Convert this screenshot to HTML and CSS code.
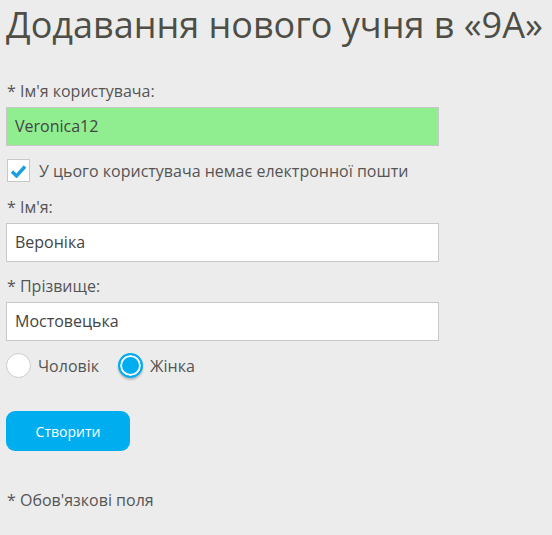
FILE: index.html
```html
<!DOCTYPE html>
<html lang="uk">
<head>
<meta charset="utf-8">
<link rel="stylesheet" href="styles.css">
</head>
<body>
<h1 class="title">Додавання нового учня в «9А»</h1>
<form class="form">
  <div class="field">
    <label class="label">* Ім'я користувача:</label>
    <div class="input input-ok">Veronica12</div>
  </div>
  <label class="check">
    <span class="check-box">
      <svg width="17" height="14" viewBox="0 0 17 14"><path d="M2 7.5 L6.5 12 L15 2.5" fill="none" stroke="#1b9fe2" stroke-width="3.4" stroke-linejoin="miter"/></svg>
    </span>
    <span class="check-text">У цього користувача немає електронної пошти</span>
  </label>
  <div class="field">
    <label class="label">* Ім'я:</label>
    <div class="input">Вероніка</div>
  </div>
  <div class="field">
    <label class="label">* Прізвище:</label>
    <div class="input">Мостовецька</div>
  </div>
  <div class="radios">
    <span class="radio-item"><span class="radio"></span><span class="radio-text">Чоловік</span></span>
    <span class="radio-item"><span class="radio radio-on"></span><span class="radio-text">Жінка</span></span>
  </div>
  <button type="button" class="btn">Створити</button>
  <p class="note">* Обов'язкові поля</p>
</form>
</body>
</html>
```
FILE: styles.css
```css
html, body {
  margin: 0;
  padding: 0;
  background: #ececec;
}
body {
  padding: 0 6px;
  font-family: "Open Sans", "DejaVu Sans", sans-serif;
  color: #555;
}
.title {
  margin: 0;
  padding-top: 2px;
  font-size: 36px;
  font-weight: 400;
  line-height: 46px;
  color: #4e4e46;
  white-space: nowrap;
}
.form {
  margin-top: 32px;
  display: flex;
  flex-direction: column;
}
.field {
  display: flex;
  flex-direction: column;
}
.label {
  font-size: 16px;
  line-height: 22px;
  margin-left: 1px;
}
.input {
  box-sizing: border-box;
  width: 433px;
  height: 39px;
  margin-top: 5px;
  border: 1px solid #c8c8c8;
  background: #fff;
  padding: 0 8px;
  font-size: 16px;
  line-height: 37px;
  color: #444;
}
.input-ok {
  background: #90ee90;
}
.check {
  display: flex;
  align-items: center;
  gap: 9px;
  margin-top: 13px;
  margin-left: 1px;
  margin-bottom: 14px;
}
.check-box {
  box-sizing: border-box;
  width: 23px;
  height: 23px;
  border: 1px solid #c8c8c8;
  background: #fff;
  display: flex;
  align-items: center;
  justify-content: center;
}
.check-text {
  font-size: 16px;
}
.field + .field {
  margin-top: 13px;
}
.radios {
  display: flex;
  gap: 19px;
  margin-top: 12px;
}
.radio-item {
  display: flex;
  align-items: center;
  gap: 7px;
  font-size: 16px;
}
.radio {
  box-sizing: border-box;
  width: 25px;
  height: 25px;
  border-radius: 50%;
  border: 1px solid #ccc;
  background: #fff;
}
.radio-on {
  border: 2px solid #00aeef;
  background: #00aeef;
  box-shadow: inset 0 0 0 2px #fff, 0 2px 2px rgba(0,0,0,0.2);
}
.btn {
  align-self: flex-start;
  margin-top: 33px;
  width: 124px;
  height: 40px;
  border: 0;
  border-radius: 9px;
  background: #00aeef;
  color: #fff;
  font-family: "Open Sans", "DejaVu Sans", sans-serif;
  font-size: 14px;
  padding: 0;
}
.note {
  margin: 38px 0 0 1px;
  font-size: 16px;
  line-height: 22px;
}
```
